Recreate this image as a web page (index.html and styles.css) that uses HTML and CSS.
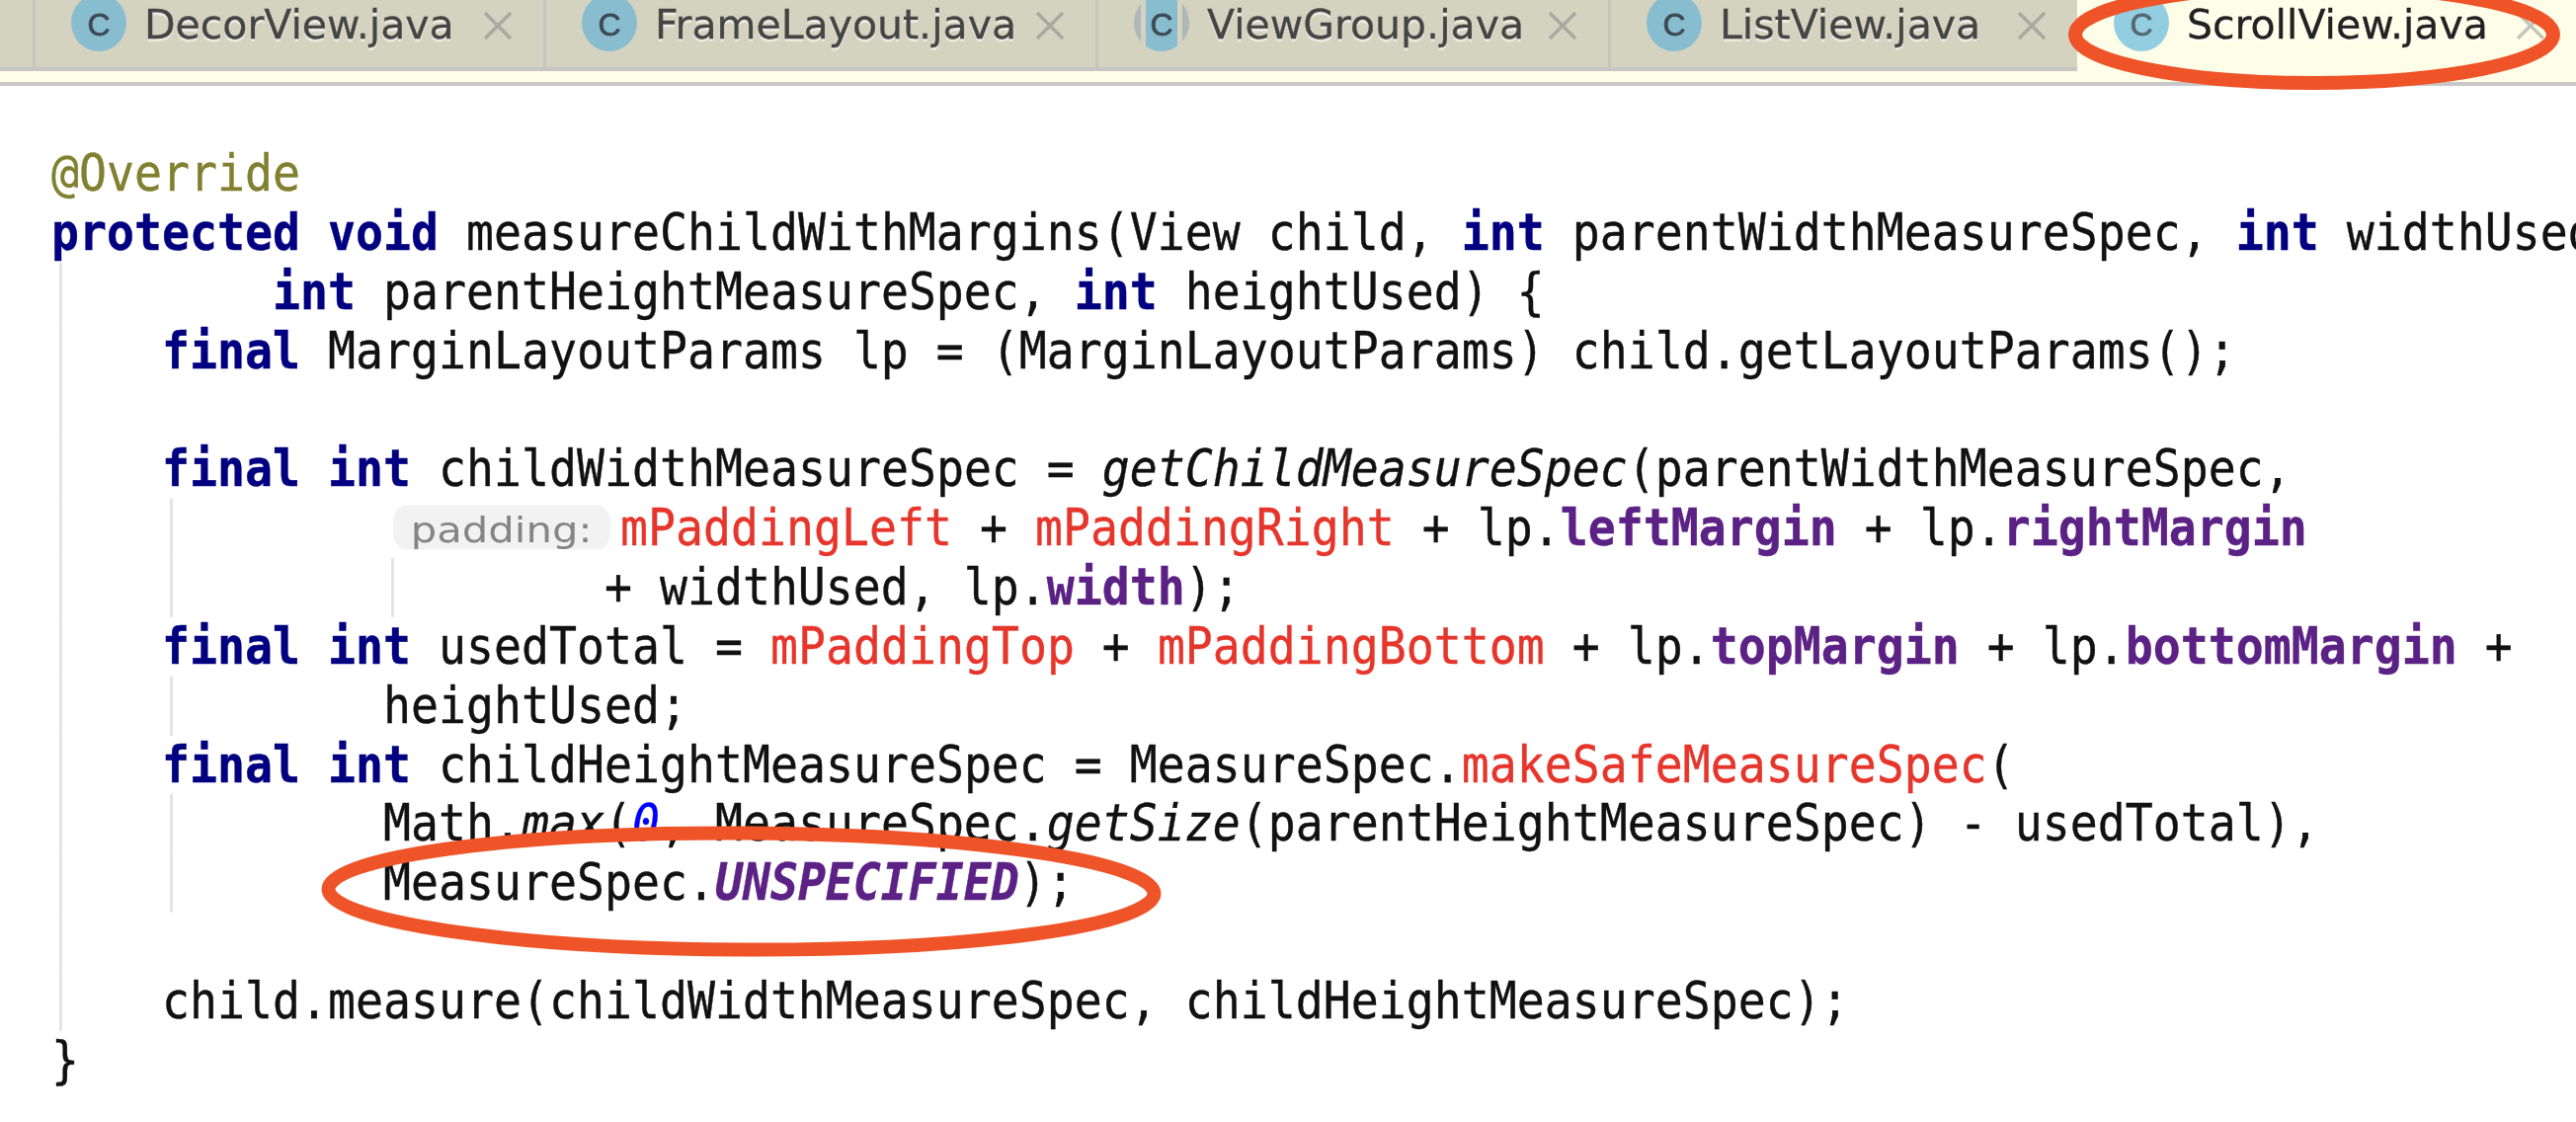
FILE: index.html
```html
<!DOCTYPE html>
<html lang="en">
<head>
<meta charset="utf-8">
<title>ScrollView.java</title>
<link rel="stylesheet" href="styles.css">
</head>
<body>
<div class="page">
  <header class="tabbar">
    <div class="tabs">
      <div class="tab first"><span class="cicon">C</span><span class="name">DecorView.java</span><svg class="close" viewBox="0 0 28 28"><path d="M1 1 27 27M27 1 1 27"/></svg></div>
      <div class="tab second"><span class="cicon">C</span><span class="name">FrameLayout.java</span><svg class="close" viewBox="0 0 28 28"><path d="M1 1 27 27M27 1 1 27"/></svg></div>
      <div class="tab third"><span class="cicon ring">C</span><span class="name">ViewGroup.java</span><svg class="close" viewBox="0 0 28 28"><path d="M1 1 27 27M27 1 1 27"/></svg></div>
      <div class="tab fourth"><span class="cicon">C</span><span class="name">ListView.java</span><svg class="close" viewBox="0 0 28 28"><path d="M1 1 27 27M27 1 1 27"/></svg></div>
      <div class="tab active"><span class="cicon">C</span><span class="name">ScrollView.java</span><svg class="close" viewBox="0 0 28 28"><path d="M1 1 27 27M27 1 1 27"/></svg></div>
    </div>
    <div class="strip"></div>
  </header>
  <main class="code">
    <div class="ln"><span class="ann">@Override</span></div>
    <div class="ln"><b class="kw">protected</b> <b class="kw">void</b> measureChildWithMargins(View child, <b class="kw">int</b> parentWidthMeasureSpec, <b class="kw">int</b> widthUsed</div>
    <div class="ln g1">        <b class="kw">int</b> parentHeightMeasureSpec, <b class="kw">int</b> heightUsed) {</div>
    <div class="ln g1">    <b class="kw">final</b> MarginLayoutParams lp = (MarginLayoutParams) child.getLayoutParams();</div>
    <div class="ln g1"> </div>
    <div class="ln g1">    <b class="kw">final</b> <b class="kw">int</b> childWidthMeasureSpec = <i>getChildMeasureSpec</i>(parentWidthMeasureSpec,</div>
    <div class="ln g2">            <span class="hint"><span class="hint-text">padding:</span></span><span class="fld">mPaddingLeft</span> + <span class="fld">mPaddingRight</span> + lp.<b class="mem">leftMargin</b> + lp.<b class="mem">rightMargin</b></div>
    <div class="ln g3">                    + widthUsed, lp.<b class="mem">width</b>);</div>
    <div class="ln g1">    <b class="kw">final</b> <b class="kw">int</b> usedTotal = <span class="fld">mPaddingTop</span> + <span class="fld">mPaddingBottom</span> + lp.<b class="mem">topMargin</b> + lp.<b class="mem">bottomMargin</b> +</div>
    <div class="ln g2">            heightUsed;</div>
    <div class="ln g1">    <b class="kw">final</b> <b class="kw">int</b> childHeightMeasureSpec = MeasureSpec.<span class="fld">makeSafeMeasureSpec</span>(</div>
    <div class="ln g2">            Math.<i>max</i>(<span class="num">0</span>, MeasureSpec.<i>getSize</i>(parentHeightMeasureSpec) - usedTotal),</div>
    <div class="ln g2">            MeasureSpec.<b class="mem"><i>UNSPECIFIED</i></b>);</div>
    <div class="ln g1"> </div>
    <div class="ln g1">    child.measure(childWidthMeasureSpec, childHeightMeasureSpec);</div>
    <div class="ln">}</div>
  </main>
  <svg class="marks" viewBox="0 0 2608 1136" aria-hidden="true">
    <ellipse cx="2343" cy="35" rx="242" ry="49"/>
    <ellipse cx="750.5" cy="902.5" rx="418" ry="59" transform="rotate(0.3 750 902)"/>
  </svg>
</div>
</body>
</html>
```
FILE: styles.css
```css
* { box-sizing: border-box; }
html, body { margin: 0; background: #fff; }
.page { position: relative; width: 2608px; height: 1136px; overflow: hidden; background: #fff; filter: blur(.6px); }
.tabbar { height: 87px; }
.tabs { display: flex; height: 72px; background: #d3d3bf; border-bottom: 4px solid #c6c6c2; }
.strip { height: 15px; background: #fefde8; border-bottom: 4px solid #c8c8c8; }
.tab { display: flex; align-items: flex-start; height: 68px; padding: 0 32px 0 36px; border-left: 3px solid #c5c5c0; overflow: hidden; }
.first { margin-left: 33px; width: 517px; }
.second { width: 559px; }
.third { width: 519px; }
.fourth { width: 475px; }
.active { width: 505px; height: 72px; margin-bottom: -4px; padding-left: 37px; background: #fefde8; border-left: 0; }
.cicon { flex: none; display: flex; align-items: center; justify-content: center; width: 56px; height: 58px; margin-top: -6px; padding-top: 4px; border-radius: 50%; background: #88bdd0; color: #3f4a52; font: 32px/1 "Liberation Sans", sans-serif; -webkit-text-stroke: .8px #3f4a52; }
.ring { background: linear-gradient(90deg, #aeb8ba 0 7px, #d3d3bf 7px 12px, #88bdd0 12px 44px, #d3d3bf 44px 49px, #aeb8ba 49px); }
.active .cicon { background: #93cde0; color: #566870; -webkit-text-stroke-color: #566870; }
.name { flex: none; margin-left: 18px; margin-top: 0; font: 41px/50px "DejaVu Sans", sans-serif; color: #454545; -webkit-text-stroke: .3px currentColor; text-shadow: 0 3px 1px rgba(255,255,255,.55); }
.active .name { color: #222; }
.close { flex: none; width: 28px; height: 28px; margin: 12px 0 0 auto; fill: none; stroke: #a9a9a2; stroke-width: 3.5; }
.active .close { stroke: #c4c4ba; }
.code { padding-top: 59px; font: 46.5px/59.87px "DejaVu Sans Mono", monospace; color: #111; }
.ln { height: 59.87px; padding-left: 52px; white-space: pre; transform: scaleY(1.12); -webkit-text-stroke: .35px currentColor; }
.ln b { font-weight: 700; }
.g1 { background: linear-gradient(#e4e4e4, #e4e4e4) 60px 50% / 3px 89.3% no-repeat; }
.g2 { background: linear-gradient(#e4e4e4, #e4e4e4) 60px 50% / 3px 89.3% no-repeat, linear-gradient(#e4e4e4, #e4e4e4) 172px 50% / 3px 89.3% no-repeat; }
.g3 { background: linear-gradient(#e4e4e4, #e4e4e4) 60px 50% / 3px 89.3% no-repeat, linear-gradient(#e4e4e4, #e4e4e4) 172px 50% / 3px 89.3% no-repeat, linear-gradient(#e4e4e4, #e4e4e4) 396px 50% / 3px 89.3% no-repeat; }
.ann { color: #808030; }
.kw { color: #000080; }
.fld { color: #e6352b; }
.mem { color: #5c2184; }
.num { color: #0000ff; font-style: italic; }
.hint { display: inline-block; width: 220px; height: 40px; margin: 9px 10px 0; border-radius: 14px; background: #f2f2f2; color: #858585; text-align: center; vertical-align: top; line-height: 38px; -webkit-text-stroke: 0; }
.hint-text { display: inline-block; font: 38px/38px "DejaVu Sans", sans-serif; transform: scale(1.1, .85); }
.marks { position: absolute; inset: 0; width: 100%; height: 100%; fill: none; stroke: #ee5428; stroke-width: 14; }
```
